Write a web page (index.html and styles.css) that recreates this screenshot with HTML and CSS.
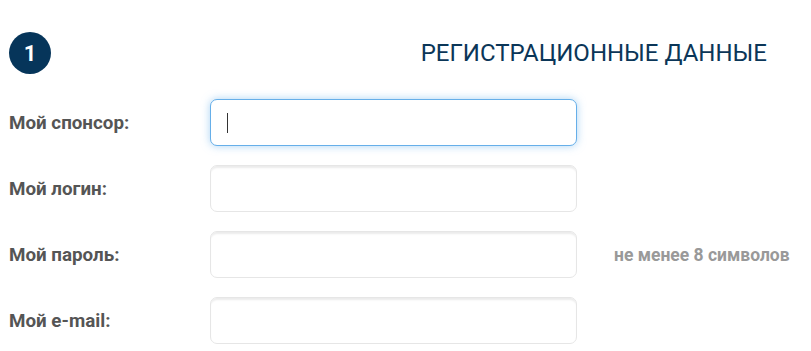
FILE: index.html
```html
<!DOCTYPE html>
<html lang="ru">
<head>
<meta charset="utf-8">
<title>Регистрация</title>
<link rel="stylesheet" href="styles.css">
</head>
<body>
<div class="page">
  <div class="section-head">
    <div class="step">1</div>
    <h2 class="section-title">РЕГИСТРАЦИОННЫЕ ДАННЫЕ</h2>
  </div>
  <form class="form">
    <div class="row">
      <label class="label" for="sponsor">Мой спонсор:</label>
      <div class="field field--focus"><span class="caret"></span></div>
    </div>
    <div class="row">
      <label class="label" for="login">Мой логин:</label>
      <div class="field"></div>
    </div>
    <div class="row">
      <label class="label" for="pass">Мой пароль:</label>
      <div class="field"></div>
      <span class="hint">не менее 8 символов</span>
    </div>
    <div class="row">
      <label class="label" for="mail">Мой e-mail:</label>
      <div class="field"></div>
    </div>
  </form>
</div>
</body>
</html>
```
FILE: styles.css
```css
html, body {
  margin: 0;
  padding: 0;
  background: #fff;
}
body {
  font-family: Roboto, "Liberation Sans", sans-serif;
}
.page {
  padding: 32px 0 0 9px;
}
.section-head {
  display: flex;
  align-items: center;
  justify-content: space-between;
  width: 758px;
  height: 42px;
}
.step {
  width: 42px;
  height: 42px;
  border-radius: 50%;
  background: #06355a;
  color: #fff;
  font-weight: 700;
  font-size: 22px;
  display: flex;
  align-items: center;
  justify-content: center;
}
.section-title {
  margin: 0;
  font-size: 24px;
  font-weight: 400;
  color: #0b3658;
  white-space: nowrap;
}
.form {
  display: flex;
  flex-direction: column;
  gap: 19px;
  margin-top: 25px;
}
.row {
  display: flex;
  align-items: center;
  height: 47px;
}
.label {
  flex: 0 0 201px;
  font-size: 18.8px;
  font-weight: 700;
  color: #555;
}
.field {
  flex: 0 0 auto;
  width: 365px;
  height: 45px;
  border: 1px solid #e6e6e6;
  border-radius: 7px;
  box-shadow: inset 0 3px 2px -1px #ebebeb;
  background: #fff;
  display: flex;
  align-items: center;
  box-sizing: content-box;
}
.field--focus {
  border-color: #66afe9;
  box-shadow: 0 0 8px rgba(102, 175, 233, 0.55);
}
.caret {
  display: block;
  width: 1px;
  height: 20px;
  background: #333;
  margin-left: 16px;
}
.hint {
  margin-left: 37px;
  font-size: 17.5px;
  font-weight: 700;
  color: #999;
  white-space: nowrap;
}
```
